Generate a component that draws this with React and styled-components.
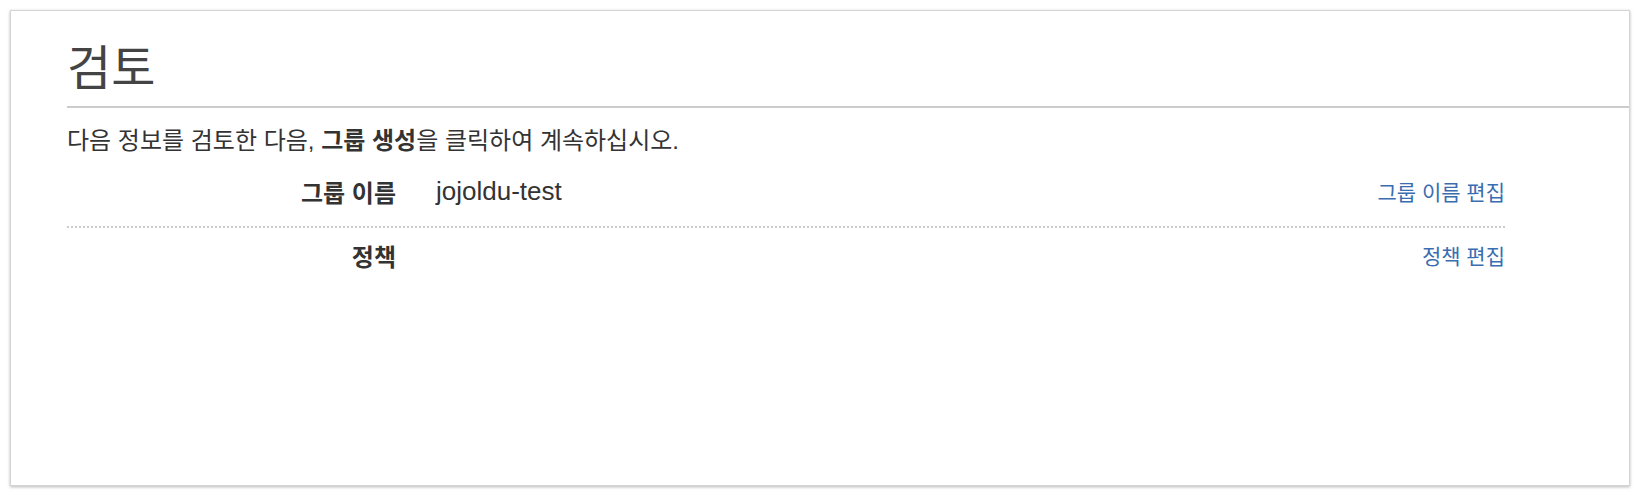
import React from "react";
import styled, { createGlobalStyle } from "styled-components";

const GlobalStyle = createGlobalStyle`
  html, body {
    margin: 0;
    padding: 0;
    background: #ffffff;
  }
  body {
    font-family: "Liberation Sans", Arial, "Noto Sans CJK KR", sans-serif;
    color: #444444;
  }
`;

const Page = styled.div`
  padding: 10px 10px 10px 10px;
  height: 496px;
  box-sizing: border-box;
`;

const Panel = styled.section`
  height: 476px;
  box-sizing: border-box;
  background: #ffffff;
  border: 1px solid #d4d4d4;
  box-shadow: 0 1px 3px rgba(0, 0, 0, 0.28);
  padding-left: 56px;
`;

const Header = styled.div`
  border-bottom: 2px solid #cccccc;
  padding-top: 28px;
  height: 97px;
  box-sizing: border-box;
`;

const Title = styled.h1`
  margin: 0;
  font-size: 48px;
  font-weight: 400;
  line-height: 60px;
  color: #444444;
`;

const Body = styled.div`
  margin-right: 124px;
`;

const Intro = styled.p`
  margin: 18px 0 0 0;
  font-size: 24px;
  line-height: 30px;
  color: #333333;

  b {
    font-weight: 700;
  }
`;

const Row = styled.div`
  display: grid;
  grid-template-columns: 329px 1fr auto;
  column-gap: 40px;
  align-items: center;
  height: ${(p) => p.$h}px;
  border-bottom: ${(p) => (p.$last ? "none" : "2px dotted #cccccc")};
  box-sizing: border-box;
`;

const Label = styled.div`
  text-align: right;
  font-size: 24px;
  font-weight: 700;
  color: #333333;
`;

const Value = styled.div`
  font-size: 26px;
  color: #333333;
`;

const EditLink = styled.a`
  font-size: 21px;
  color: #3a6db0;
  text-decoration: none;
  cursor: pointer;
`;

export default function App() {
  return (
    <>
      <GlobalStyle />
      <Page>
        <Panel>
          <Header>
            <Title>검토</Title>
          </Header>
          <Body>
            <Intro>
              다음 정보를 검토한 다음, <b>그룹 생성</b>을 클릭하여 계속하십시오.
            </Intro>
            <Row $h={72}>
              <Label>그룹 이름</Label>
              <Value>jojoldu-test</Value>
              <EditLink>그룹 이름 편집</EditLink>
            </Row>
            <Row $h={54} $last>
              <Label>정책</Label>
              <Value />
              <EditLink>정책 편집</EditLink>
            </Row>
          </Body>
        </Panel>
      </Page>
    </>
  );
}
